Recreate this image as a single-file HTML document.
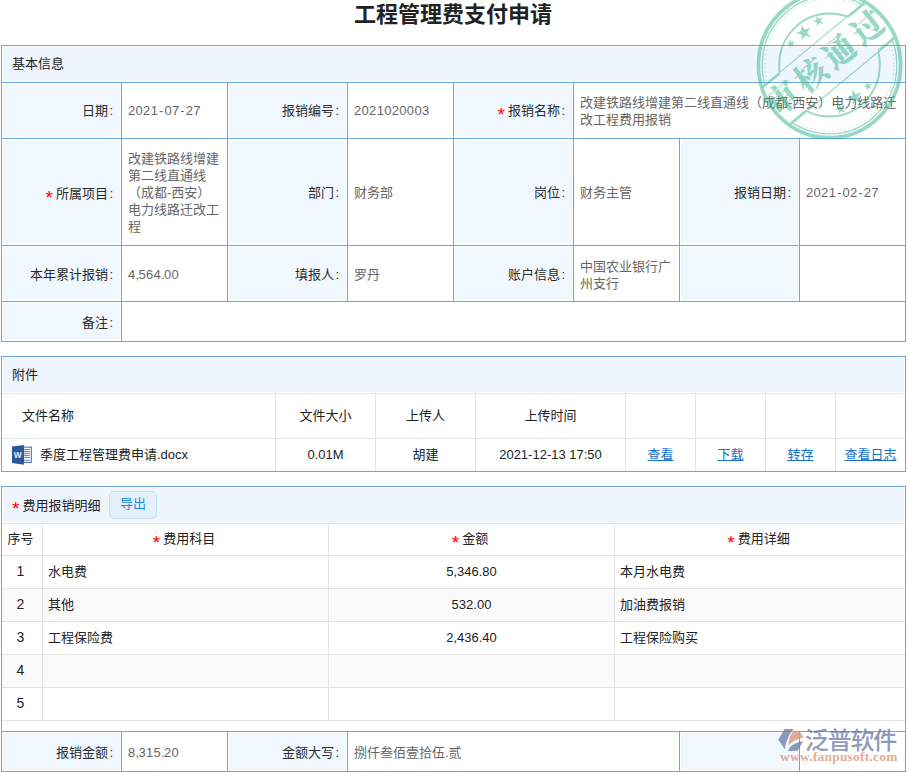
<!DOCTYPE html>
<html lang="zh-CN">
<head>
<meta charset="utf-8">
<title>工程管理费支付申请</title>
<style>
*{box-sizing:border-box;}
html,body{margin:0;padding:0;background:#fff;}
body{width:908px;height:773px;position:relative;overflow:hidden;font-family:"Liberation Sans","Noto Sans CJK SC",sans-serif;font-size:13px;color:#333;}
h1{position:absolute;left:-1px;top:0;width:908px;margin:0;text-align:center;font-size:22px;line-height:30px;font-weight:bold;color:#222;}
table{border-collapse:collapse;table-layout:fixed;position:absolute;left:1px;width:904px;}
td,th{padding:0;font-weight:normal;overflow:hidden;line-height:17px;}
.form td{border:1px solid #6fa7dd;vertical-align:middle;line-height:17px;}
.form td.l{background:#f0f7ff;text-align:right;padding-right:8px;color:#2b2b2b;}
.form td.v{background:#fff;color:#666;padding-left:6px;padding-right:4px;text-align:left;}
.form td.hd{background:#eff5ff;text-align:left;padding-left:10px;color:#222;padding-bottom:2px;}
.form tr.d td{padding-top:2px;}
.form td.d{padding-top:2px;}
td.l,td.hd{box-shadow:inset 0 0 0 1px #fff;}
td.w{white-space:nowrap;}
.red{color:#f00;font-size:19px;line-height:0;position:relative;top:6px;margin-right:3px;}
i{font-style:normal;display:inline-block;width:5px;text-align:right;}
#t1{top:45px;}
#t2{top:356px;}
#t2 td{border:1px solid #e4e4e4;text-align:center;color:#222;padding-bottom:2px;}
#t2{border:1px solid #6fa7dd;}
#t2 td.hd{background:#eff5ff;text-align:left;padding-left:10px;border-color:#e4e4e4;}
#t2 a{color:#1570cc;text-decoration:underline;}
#t3{top:486px;border:1px solid #6fa7dd;}
#t3 td{border:1px solid #e4e4e4;color:#222;padding-bottom:2px;}
#t3 td.hd{background:#eff5ff;text-align:left;padding-left:10px;padding-bottom:0;}
#t3 td.c{text-align:center;}
#t3 td.h{text-align:center;padding-right:3px;}
#t3 td.c:first-child{padding-right:3px;}
#t3 td.sn{font-size:14px;padding-right:2px;}
#t3 td.tl{text-align:left;padding-left:5px;}
#t3 tr.alt td{background:#fafafa;}
#t4{top:731px;}
#t2 tr:first-child td,#t3 tr:first-child td{border-top-color:#6fa7dd;}
#t2 tr:last-child td{border-bottom-color:#6fa7dd;}
#t2 td:first-child,#t3 td:first-child{border-left-color:#6fa7dd;}
#t2 td:last-child,#t3 td:last-child{border-right-color:#6fa7dd;}
.n{letter-spacing:0.32px;}
.n u{text-decoration:none;margin:0 0.8px;}
.n s{text-decoration:none;letter-spacing:-0.7px;}
.fr{position:absolute;left:1px;width:905px;border:1px solid #6fa7dd;}
.lb{position:relative;top:2px;}
.lb .red{top:5px;}
.btn{display:inline-block;width:48px;height:28px;line-height:24px;border:1px solid #c9dff3;border-radius:5px;background:#e3f0fc;color:#1b8be0;text-align:center;margin-left:8.6px;vertical-align:middle;}
</style>
</head>
<body>
<h1>工程管理费支付申请</h1>

<table id="t1" class="form">
<colgroup><col style="width:120px"><col style="width:106px"><col style="width:120px"><col style="width:106px"><col style="width:120px"><col style="width:106px"><col style="width:120px"><col style="width:106px"></colgroup>
<tr style="height:37px"><td class="hd" colspan="8">基本信息</td></tr>
<tr style="height:56px"><td class="l">日期<i>:</i></td><td class="v n">2021<u>-</u>07<u>-</u>27</td><td class="l">报销编号<i>:</i></td><td class="v n">2021020003</td><td class="l"><span class="red">*</span>报销名称<i>:</i></td><td class="v w" colspan="3">改建铁路线增建第二线直通线（成都-西安）电力线路迁<br>改工程费用报销</td></tr>
<tr style="height:107px"><td class="l d"><span class="red">*</span>所属项目<i>:</i></td><td class="v w">改建铁路线增建<br>第二线直通线<br>（成都-西安）<br>电力线路迁改工<br>程</td><td class="l">部门<i>:</i></td><td class="v">财务部</td><td class="l">岗位<i>:</i></td><td class="v">财务主管</td><td class="l">报销日期<i>:</i></td><td class="v n">2021<u>-</u>02<u>-</u>27</td></tr>
<tr class="d" style="height:56px"><td class="l">本年累计报销<i>:</i></td><td class="v n">4<s>,</s>564<s>.</s>00</td><td class="l">填报人<i>:</i></td><td class="v">罗丹</td><td class="l">账户信息<i>:</i></td><td class="v w">中国农业银行广<br>州支行</td><td class="l"></td><td class="v"></td></tr>
<tr class="d" style="height:40px"><td class="l">备注<i>:</i></td><td class="v" colspan="7"></td></tr>
</table>

<table id="t2">
<colgroup><col style="width:274px"><col style="width:100px"><col style="width:100px"><col style="width:150px"><col style="width:70px"><col style="width:70px"><col style="width:70px"><col style="width:70px"></colgroup>
<tr style="height:37px"><td class="hd" colspan="8">附件</td></tr>
<tr style="height:45px"><td style="text-align:left;padding-left:20px">文件名称</td><td>文件大小</td><td>上传人</td><td>上传时间</td><td></td><td></td><td></td><td></td></tr>
<tr style="height:33px"><td style="text-align:left;padding-left:38px">季度工程管理费申请.docx</td><td>0.01M</td><td>胡建</td><td>2021-12-13 17:50</td><td><a>查看</a></td><td><a>下载</a></td><td><a>转存</a></td><td><a>查看日志</a></td></tr>
</table>

<table id="t3">
<colgroup><col style="width:41px"><col style="width:286px"><col style="width:286px"><col style="width:291px"></colgroup>
<tr style="height:37px"><td class="hd" colspan="4"><span class="lb"><span class="red">*</span>费用报销明细</span><span class="btn">导出</span></td></tr>
<tr style="height:32px"><td class="c">序号</td><td class="h"><span class="red">*</span>费用科目</td><td class="h"><span class="red">*</span>金额</td><td class="h"><span class="red">*</span>费用详细</td></tr>
<tr style="height:33px"><td class="c sn">1</td><td class="tl">水电费</td><td class="c">5,346.80</td><td class="tl">本月水电费</td></tr>
<tr style="height:33px" class="alt"><td class="c sn">2</td><td class="tl">其他</td><td class="c">532.00</td><td class="tl">加油费报销</td></tr>
<tr style="height:33px"><td class="c sn">3</td><td class="tl">工程保险费</td><td class="c">2,436.40</td><td class="tl">工程保险购买</td></tr>
<tr style="height:33px" class="alt"><td class="c sn">4</td><td></td><td></td><td></td></tr>
<tr style="height:33px"><td class="c sn">5</td><td></td><td></td><td></td></tr>
<tr style="height:11px"><td colspan="4" style="border:none"></td></tr>
</table>

<table id="t4" class="form">
<colgroup><col style="width:120px"><col style="width:106px"><col style="width:120px"><col style="width:106px"><col style="width:120px"><col style="width:106px"><col style="width:120px"><col style="width:106px"></colgroup>
<tr class="d" style="height:40px"><td class="l">报销金额<i>:</i></td><td class="v n">8<s>,</s>315<s>.</s>20</td><td class="l">金额大写<i>:</i></td><td class="v" colspan="3">捌仟叁佰壹拾伍.贰</td><td class="l"></td><td class="v"></td></tr>
</table>

<div class="fr" style="top:356px;height:116px"></div>
<div class="fr" style="top:486px;height:246px"></div>
<svg id="wicon" width="20" height="20" viewBox="0 0 20 20" style="position:absolute;left:12px;top:445px">
<rect x="11.5" y="2.1" width="7.8" height="15.3" fill="#fff" stroke="#3d66a8" stroke-width="1"/>
<path d="M12,4.5H17.8M12,6.5H17.8M12,8.4H17.8M12,10.4H17.8M12,12.4H17.8M12,15.3H17.8" stroke="#5a7fba" stroke-width="1"/>
<polygon points="0,1.6 11.8,0.1 11.8,19.7 0,17.9" fill="#2b579a"/>
<text x="5.7" y="12.6" text-anchor="middle" font-family="'Liberation Sans',sans-serif" font-weight="bold" font-size="8.4" fill="#e9eef7">W</text>
</svg>
<svg id="logo" width="130" height="45" viewBox="775 725 130 45" style="position:absolute;left:775px;top:725px;opacity:0.78">
<path d="M778.3,739.8L784.6,728.9H793.8C789.5,733 786,741 784.8,749.3Z" fill="#6f80a8"/>
<path d="M788.6,745.3C788.8,738 791,733 794.2,730.9C798.5,729.6 802,733 803.1,737.9C797,738.5 792,741.5 788.6,745.3Z" fill="#dc9677"/>
<path d="M787.9,751.1C789.5,746.5 794,742.5 803.1,741.2L797.8,750.8Z" fill="#6f80a8"/>
<text x="804.8" y="749.3" font-family="'Liberation Sans','Noto Sans CJK SC',sans-serif" font-size="24" font-weight="500" textLength="92.5" lengthAdjust="spacing" fill="#6f80a8">泛普软件</text>
<text x="780" y="760.7" font-family="'Liberation Serif',serif" font-weight="bold" font-size="13.5" textLength="117.5" lengthAdjust="spacing" fill="#dc9677">www.fanpusoft.com</text>
</svg>
<svg id="stamp" width="170" height="160" viewBox="0 0 170 160" style="position:absolute;left:745px;top:0;overflow:hidden;opacity:0.5">
<defs><clipPath id="cp"><path clip-rule="evenodd" d="M-200,-200H200V200H-200Z M-120,-26H120V21H-120Z" transform="rotate(-39)"/></clipPath>
<clipPath id="cq"><path clip-rule="evenodd" d="M-200,-200H200V200H-200Z M51,0A51,51 0 1,0 -51,0A51,51 0 1,0 51,0Z"/></clipPath>
<clipPath id="cr"><circle r="72"/></clipPath></defs>
<g transform="translate(84.5,65.0) scale(0.987,1.01)">
<g fill="none" stroke="#35b48a">
<circle r="72" stroke-width="3.7"/>
<g clip-path="url(#cp)">
<circle r="68.2" stroke-width="1.3"/>
<circle r="65.5" stroke-width="1.2" stroke-dasharray="1.2 3.1" stroke-opacity="0.7"/>
<circle r="51" stroke-width="1.9"/>
</g>
<g clip-path="url(#cr)">
<path d="M-79,-26H79M-79,21H79" stroke-width="1.1" transform="rotate(-39)"/>
<g clip-path="url(#cq)"><path d="M-79,-25.4H79M-79,20.4H79" stroke-width="2.6" transform="rotate(-39)"/></g>
</g>
</g>
<g fill="#35b48a"><polygon points="-40.5,-25.2 -38.5,-22.7 -35.5,-23.8 -37.2,-21.1 -35.3,-18.5 -38.4,-19.3 -40.2,-16.7 -40.4,-19.9 -43.5,-20.8 -40.5,-22.0"/><polygon points="37.5,16.8 39.5,19.3 42.5,18.2 40.8,20.9 42.7,23.5 39.6,22.7 37.8,25.3 37.6,22.1 34.5,21.2 37.5,20.0"/><polygon points="-28.5,-39.5 -24.9,-35.1 -19.5,-36.9 -22.6,-32.1 -19.2,-27.5 -24.7,-29.0 -28.0,-24.3 -28.3,-30.0 -33.8,-31.7 -28.5,-33.8"/><polygon points="23.1,24.5 26.7,28.9 32.1,27.1 29.0,31.9 32.4,36.5 26.9,35.0 23.6,39.7 23.3,34.0 17.8,32.3 23.1,30.2"/><polygon points="-13.2,-48.8 -10.7,-45.7 -7.0,-47.0 -9.1,-43.7 -6.7,-40.5 -10.5,-41.5 -12.8,-38.3 -13.0,-42.2 -16.8,-43.4 -13.1,-44.8"/><polygon points="9.4,38.4 11.9,41.5 15.6,40.2 13.5,43.5 15.9,46.7 12.1,45.7 9.8,48.9 9.6,45.0 5.8,43.8 9.5,42.4"/>
<text transform="rotate(-39)" x="0" y="7.5" text-anchor="middle" font-family="'Liberation Serif','Noto Serif CJK SC',serif" font-weight="900" font-size="32.5" letter-spacing="4.6">审核通过</text>
</g>
</g>
</svg>
</body>
</html>
